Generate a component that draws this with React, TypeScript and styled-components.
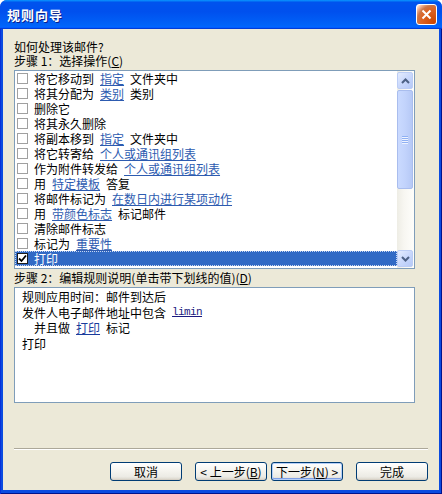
import React from "react";
import styled, { createGlobalStyle } from "styled-components";

const FONT = `"Noto Sans CJK SC", "Noto Sans CJK TC", "Noto Sans", sans-serif`;

const Global = createGlobalStyle`
  html, body { margin: 0; padding: 0; background: #ffffff; }
  body { font-family: ${FONT}; font-size: 12px; color: #000; }
  * { box-sizing: border-box; }
`;

const Window = styled.div`
  width: 442px;
  height: 494px;
  display: flex;
  flex-direction: column;
  border-radius: 7px 7px 0 0;
  overflow: hidden;
  background: #0a46dc;
`;

const TitleBar = styled.div`
  height: 29px;
  flex: none;
  display: flex;
  align-items: center;
  justify-content: space-between;
  padding: 0 5px 0 7px;
  background: linear-gradient(
    180deg,
    #0997ff 0%,
    #0053ee 8%,
    #0050ee 40%,
    #0063f8 86%,
    #0066ff 92%,
    #005bff 95%,
    #003dd7 97%,
    #003dd7 100%
  );
`;

const Title = styled.span`
  font-family: ${FONT};
  font-size: 13px;
  font-weight: 700;
  color: #ffffff;
  letter-spacing: 1px;
  text-shadow: 1px 1px 0 #0a1e8c;
  line-height: 16px;
`;

const CloseButton = styled.button`
  width: 21px;
  height: 21px;
  padding: 0;
  display: flex;
  align-items: center;
  justify-content: center;
  border: 1px solid #ffffff;
  border-radius: 3px;
  background: radial-gradient(
    circle at 90% 90%,
    #cc4600 0,
    #dc6527 55%,
    #cd7546 70%,
    #ffccb2 90%,
    #ffffff 100%
  );
`;

const Frame = styled.div`
  flex: 1;
  display: flex;
  padding: 0 3px 4px 3px;
  background: #0b4be0;
  box-shadow: inset 1px 0 #0831d9, inset -1px 0 #00138c, inset 0 -1px #00138c;
`;

const Client = styled.div`
  flex: 1;
  display: flex;
  flex-direction: column;
  padding: 11px 11px 0 11px;
  background: #ece9d8;
`;

const Caption = styled.div<{ $h?: number }>`
  font-family: ${FONT};
  font-size: 12px;
  line-height: ${(p) => p.$h ?? 14}px;
  height: ${(p) => p.$h ?? 14}px;
  white-space: nowrap;
`;

const Key = styled.span`
  text-decoration: underline;
`;

const ListBox = styled.div`
  margin-top: 2px;
  width: 401px;
  height: 199px;
  flex: none;
  display: flex;
  border: 1px solid #7f9db9;
  background: #ffffff;
`;

const Rows = styled.div`
  flex: 1;
  display: flex;
  flex-direction: column;
`;

const Row = styled.div<{ $selected?: boolean }>`
  height: 15px;
  display: flex;
  align-items: center;
  gap: 6px;
  padding-left: 2px;
  font-family: ${FONT};
  font-size: 12px;
  line-height: 15px;
  white-space: nowrap;
  color: ${(p) => (p.$selected ? "#ffffff" : "#000000")};
  background: ${(p) => (p.$selected ? "#316ac5" : "transparent")};
  outline: ${(p) => (p.$selected ? "1px dotted #c8d6f0" : "none")};
  outline-offset: -1px;
`;

const Check = styled.span<{ $on?: boolean }>`
  width: 11px;
  height: 11px;
  flex: none;
  display: flex;
  align-items: center;
  justify-content: center;
  border: 1px solid ${(p) => (p.$on ? "#1c1c1c" : "#a0a0a0")};
  background: #ffffff;
  margin-top: -1px;
`;

const Link = styled.span<{ $tone?: "list" | "rule" }>`
  color: ${(p) => (p.$tone === "rule" ? "#1a3b9c" : "#2d5bb0")};
  text-decoration: underline;
`;

const Mono = styled.span`
  font-family: "Liberation Mono", "DejaVu Sans Mono", monospace;
  font-size: 11px;
  letter-spacing: -0.6px;
  color: #1a1a80;
  text-decoration: underline;
`;

const ScrollBar = styled.div`
  width: 17px;
  flex: none;
  display: flex;
  flex-direction: column;
  background: linear-gradient(90deg, #eeede5 0%, #f7f6f1 40%, #fefefb 100%);
`;

const ScrollButton = styled.div`
  height: 17px;
  flex: none;
  margin: 1px 1px 0 0;
  display: flex;
  align-items: center;
  justify-content: center;
  border: 1px solid #bccdf5;
  border-radius: 2px;
  background: linear-gradient(135deg, #e4ecfe 0%, #c9d8fc 50%, #b5c9f7 100%);
  &:last-child {
    margin: 0 1px 1px 0;
  }
`;

const Track = styled.div`
  flex: 1;
  display: flex;
  flex-direction: column;
  padding-top: 1px;
`;

const Thumb = styled.div`
  height: 99px;
  margin-right: 1px;
  display: flex;
  flex-direction: column;
  align-items: center;
  justify-content: center;
  gap: 1px;
  border: 1px solid #a9bdee;
  border-radius: 2px;
  background: linear-gradient(90deg, #cadaff 0%, #c2d3fc 50%, #b6c9f6 100%);
`;

const Grip = styled.span`
  width: 6px;
  height: 1px;
  background: #8fb0f3;
  box-shadow: 0 1px #eef3ff;
`;

const RuleBox = styled.div`
  width: 401px;
  height: 116px;
  flex: none;
  padding: 1px 0 0 7px;
  border: 1px solid #7f9db9;
  background: #ffffff;
  font-family: ${FONT};
  font-size: 12px;
`;

const RuleLine = styled.div<{ $indent?: boolean }>`
  line-height: 15.67px;
  height: 15.67px;
  display: flex;
  gap: 6px;
  white-space: nowrap;
  padding-left: ${(p) => (p.$indent ? 12 : 0)}px;
`;

const Separator = styled.div`
  margin-top: 45px;
  height: 2px;
  flex: none;
  border-top: 1px solid #aca899;
  border-bottom: 1px solid #ffffff;
`;

const ButtonRow = styled.div`
  margin-top: 12px;
  display: flex;
  justify-content: flex-end;
`;

const Button = styled.button<{ $gap?: number; $default?: boolean }>`
  width: 72px;
  height: 19px;
  margin-left: ${(p) => p.$gap ?? 0}px;
  padding: 0;
  font-family: ${FONT};
  font-size: 12px;
  line-height: 15px;
  color: #000;
  white-space: nowrap;
  border: 1px solid #003c74;
  border-radius: 3px;
  background: linear-gradient(180deg, #ffffff 0%, #f5f4ef 45%, #ecebe5 80%, #d8d3c8 100%);
  box-shadow: ${(p) =>
    p.$default
      ? "inset 0 0 0 1px #b5cff8, inset 0 -1px 0 1px #7e9fe6"
      : "inset 0 -1px 0 #d6d0c5"};
`;

type Seg = { t: string; link?: boolean };

const actions: Seg[][] = [
  [{ t: "将它移动到" }, { t: "指定", link: true }, { t: "文件夹中" }],
  [{ t: "将其分配为" }, { t: "类别", link: true }, { t: "类别" }],
  [{ t: "删除它" }],
  [{ t: "将其永久删除" }],
  [{ t: "将副本移到" }, { t: "指定", link: true }, { t: "文件夹中" }],
  [{ t: "将它转寄给" }, { t: "个人或通讯组列表", link: true }],
  [{ t: "作为附件转发给" }, { t: "个人或通讯组列表", link: true }],
  [{ t: "用" }, { t: "特定模板", link: true }, { t: "答复" }],
  [{ t: "将邮件标记为" }, { t: "在数日内进行某项动作", link: true }],
  [{ t: "用" }, { t: "带颜色标志", link: true }, { t: "标记邮件" }],
  [{ t: "清除邮件标志" }],
  [{ t: "标记为" }, { t: "重要性", link: true }],
  [{ t: "打印" }],
];

const SELECTED = 12;

const Arrow = ({ up }: { up?: boolean }) => (
  <svg width="9" height="6" viewBox="0 0 9 6">
    <path
      d={up ? "M1 5 L4.5 1.5 L8 5" : "M1 1 L4.5 4.5 L8 1"}
      fill="none"
      stroke="#4d6185"
      strokeWidth="2"
    />
  </svg>
);

export default function App() {
  return (
    <>
      <Global />
      <Window>
        <TitleBar>
          <Title>规则向导</Title>
          <CloseButton aria-label="关闭">
            <svg width="11" height="11" viewBox="0 0 11 11">
              <path d="M1.5 1.5 L9.5 9.5 M9.5 1.5 L1.5 9.5" stroke="#ffffff" strokeWidth="2" />
            </svg>
          </CloseButton>
        </TitleBar>
        <Frame>
          <Client>
            <Caption>如何处理该邮件?</Caption>
            <Caption>
              步骤 1：选择操作(<Key>C</Key>)
            </Caption>
            <ListBox>
              <Rows>
                {actions.map((segs, i) => (
                  <Row key={i} $selected={i === SELECTED}>
                    <Check $on={i === SELECTED}>
                      {i === SELECTED && (
                        <svg width="9" height="9" viewBox="0 0 9 9">
                          <path d="M1 4.5 L3.5 7 L8 1.5" fill="none" stroke="#000" strokeWidth="1.8" />
                        </svg>
                      )}
                    </Check>
                    {segs.map((s, j) =>
                      s.link ? (
                        <Link key={j} $tone="list">
                          {s.t}
                        </Link>
                      ) : (
                        <span key={j}>{s.t}</span>
                      )
                    )}
                  </Row>
                ))}
              </Rows>
              <ScrollBar>
                <ScrollButton>
                  <Arrow up />
                </ScrollButton>
                <Track>
                  <Thumb>
                    <Grip />
                    <Grip />
                    <Grip />
                    <Grip />
                  </Thumb>
                </Track>
                <ScrollButton>
                  <Arrow />
                </ScrollButton>
              </ScrollBar>
            </ListBox>
            <Caption $h={18}>
              步骤 2：编辑规则说明(单击带下划线的值)(<Key>D</Key>)
            </Caption>
            <RuleBox>
              <RuleLine>规则应用时间：邮件到达后</RuleLine>
              <RuleLine>
                <span>发件人电子邮件地址中包含</span>
                <Mono>limin</Mono>
              </RuleLine>
              <RuleLine $indent>
                <span>并且做</span>
                <Link $tone="rule">打印</Link>
                <span>标记</span>
              </RuleLine>
              <RuleLine>打印</RuleLine>
            </RuleBox>
            <Separator />
            <ButtonRow>
              <Button>取消</Button>
              <Button $gap={13}>
                &lt; 上一步(<Key>B</Key>)
              </Button>
              <Button $gap={4} $default>
                下一步(<Key>N</Key>) &gt;
              </Button>
              <Button $gap={13}>完成</Button>
            </ButtonRow>
          </Client>
        </Frame>
      </Window>
    </>
  );
}
